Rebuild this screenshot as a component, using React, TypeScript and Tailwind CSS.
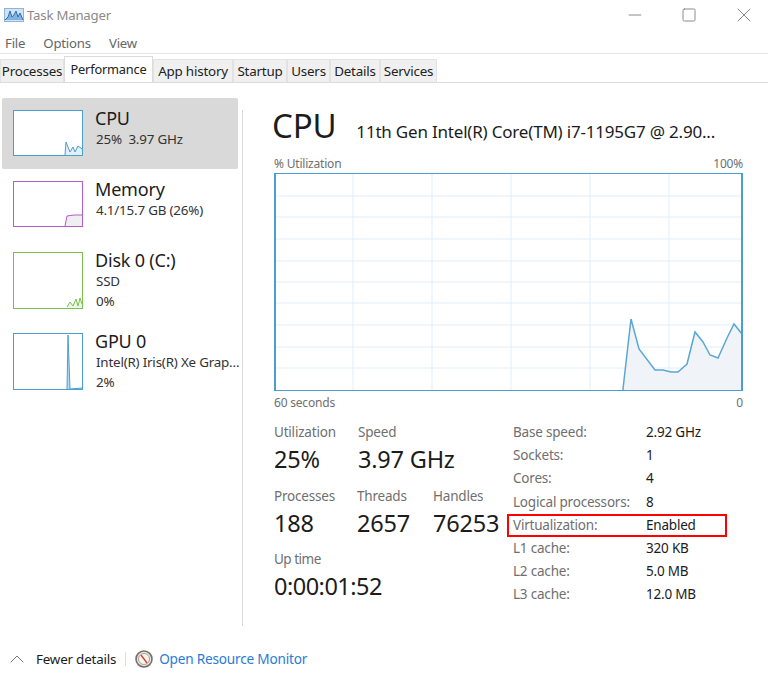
import { ChevronUp, Minus, Square, X } from 'lucide-react';

const tabs = [
  { name: 'Processes', cls: 'w-[64px]' },
  { name: 'Performance', cls: 'w-[89px]' },
  { name: 'App history', cls: 'w-[80px]' },
  { name: 'Startup', cls: 'w-[54px]' },
  { name: 'Users', cls: 'w-[43px]' },
  { name: 'Details', cls: 'w-[50px]' },
  { name: 'Services', cls: 'w-[57px]' },
];

const cpuLine = '348,215 356,145 364,175 380,196 388,196 396,198 403,198 412,190 420,158 428,168 435,181 443,184 452,164 459,150 467,160';

const details = [
  ['Base speed:', '2.92 GHz'],
  ['Sockets:', '1'],
  ['Cores:', '4'],
  ['Logical processors:', '8'],
  ['Virtualization:', 'Enabled'],
  ['L1 cache:', '320 KB'],
  ['L2 cache:', '5.0 MB'],
  ['L3 cache:', '12.0 MB'],
];

function Thumb({ color, fill, line, tall }: { color: string; fill: string; line: string; tall?: boolean }) {
  const h = tall ? 57 : 46;
  const startX = line.split(' ')[0].split(',')[0];
  return (
    <svg
      width="70"
      height={h}
      viewBox={`0 0 68 ${h - 2}`}
      className="block shrink-0 border bg-white"
      style={{ borderColor: color }}
    >
      <polygon points={`${line} 68,${h - 2} ${startX},${h - 2}`} fill={fill} />
      <polyline points={line} fill="none" stroke={color} strokeWidth="1" />
    </svg>
  );
}

function SideItem({ title, lines, active, children }: { title: string; lines: string[]; active?: boolean; children: React.ReactNode }) {
  return (
    <div className={`flex h-[71px] gap-[12px] rounded-[2px] pl-[11px] pt-[12px] ${active ? 'bg-[#d9d9d9]' : ''}`}>
      {children}
      <div className="min-w-0 text-[#1c1c1c]">
        <div className="text-[18px] leading-[22px] -mt-[3px]">{title}</div>
        {lines.map((l) => (
          <div key={l} className="ml-px whitespace-pre text-[13.4px] leading-[20px] text-[#333]">{l}</div>
        ))}
      </div>
    </div>
  );
}

function Stat({ label, value, className }: { label: string; value: string; className?: string }) {
  return (
    <div className={className}>
      <div className="text-[13.5px] leading-[18px] text-[#6f6f6f]">{label}</div>
      <div className="text-[23.5px] leading-[32px] mt-[2px] text-[#1c1c1c]">{value}</div>
    </div>
  );
}

export default function App() {
  return (
    <div className="w-[768px] h-[685px] overflow-hidden bg-white text-[#1c1c1c] font-['Noto_Sans',sans-serif] tracking-[-0.2px]">
      {/* Title bar */}
      <div className="flex h-[30px] items-center pl-[4px]">
        <svg width="20" height="14" viewBox="0 0 20 14" className="mr-[3px]">
          <rect x="0.5" y="0.5" width="19" height="13" fill="#cfe3f5" stroke="#8fb4d8" />
          <polyline points="1,12 4,9 6,3 8,9 10,7 12,3 14,9 16,5 19,12" fill="#7fb2e0" stroke="#2f6fb5" />
        </svg>
        <span className="pt-px text-[13.2px] text-[#8a8a8a]">Task Manager</span>
        <div className="ml-auto flex items-center gap-[36px] pr-[12px] text-[#8a8a8a]">
          <Minus size={20} strokeWidth={1.2} />
          <Square size={16} strokeWidth={1.5} />
          <X size={24} strokeWidth={1} className="-ml-px" />
        </div>
      </div>
      {/* Menu */}
      <div className="flex h-[24px] items-center gap-[18px] border-b border-[#e4e4e4] pl-[5px] pt-[4px] text-[13.2px] text-[#666]">
        <span>File</span>
        <span>Options</span>
        <span>View</span>
      </div>
      {/* Tabs */}
      <div className="flex h-[29px] items-end border-b border-[#dcdcdc]">
        {tabs.map((t) =>
          t.name === 'Performance' ? (
            <div key={t.name} className={`${t.cls} flex h-[26px] items-center justify-center border border-b-0 border-[#dcdcdc] bg-white pt-[1px] text-[12.8px] text-[#222]`}>{t.name}</div>
          ) : (
            <div key={t.name} className={`${t.cls} flex h-[23px] items-center justify-center border border-b-0 border-[#e2e2e2] bg-[#f0f0f0] pt-[1px] text-[13.4px] text-[#222]`}>{t.name}</div>
          ),
        )}
      </div>
      {/* Body */}
      <div className="flex h-[564px]">
        <div className="relative w-[243px] shrink-0 pt-[15px] pl-[2px] pr-[5px]">
          <div className="absolute right-0 top-[27px] h-[516px] w-px bg-[#d9d9d9]" />
          <SideItem active title="CPU" lines={['25%  3.97 GHz']}>
            <Thumb color="#4a9fd0" fill="#e4eef6" line="51,44 52,31 56,41 59,36 61,41 64,35 68,38" />
          </SideItem>
          <SideItem title="Memory" lines={['4.1/15.7 GB (26%)']}>
            <Thumb color="#b45cc8" fill="#f1eef3" line="51,44 53,34 60,33 68,33" />
          </SideItem>
          <SideItem title="Disk 0 (C:)" lines={['SSD', '0%']}>
            <Thumb tall color="#7cc04f" fill="#eef6e8" line="53,54 56,49 59,53 62,46 64,53 66,45 68,51" />
          </SideItem>
          <div className="h-[10px]" />
          <SideItem title="GPU 0" lines={['Intel(R) Iris(R) Xe Grap...', '2%']}>
            <Thumb tall color="#4a9fd0" fill="#b9d8ec" line="53,55 54,1 56,55 68,54" />
          </SideItem>
        </div>

        <div className="ml-[31px] w-[469px] shrink-0 pt-[23px]">
          <div className="flex h-[40px] items-baseline gap-[21px]">
            <span className="-ml-[2px] text-[33px] leading-[40px]">CPU</span>
            <span className="-ml-px whitespace-nowrap text-[17px]">11th Gen Intel(R) Core(TM) i7-1195G7 @ 2.90...</span>
          </div>
          <div className="mt-[10px] flex justify-between text-[12px] leading-[16px] text-[#6f6f6f]">
            <span>% Utilization</span>
            <span>100%</span>
          </div>
          <svg width="469" height="218" viewBox="1 0 465 216" className="mt-[1px] block border border-x-2 border-[#4a9fd0]">
            {[22, 43, 65, 87, 108, 129, 151, 173, 194].map((y) => (
              <line key={y} x1="0" x2="467" y1={y} y2={y} stroke="#dfeefa" />
            ))}
            {[78, 157, 236, 315, 394].map((x) => (
              <line key={x} y1="0" y2="216" x1={x} x2={x} stroke="#dfeefa" />
            ))}
            <polygon points={`${cpuLine} 467,216 348,216`} fill="#f0f4f9" />
            <polyline points={`348,216 ${cpuLine}`} fill="none" stroke="#5ba7d3" strokeWidth="1.5" />
          </svg>
          <div className="mt-[4px] flex justify-between text-[12px] leading-[16px] text-[#6f6f6f]">
            <span>60 seconds</span>
            <span>0</span>
          </div>

          <div className="mt-[12px] flex">
            <div className="w-[239px]">
              <div className="flex">
                <Stat label="Utilization" value="25%" className="w-[84px]" />
                <Stat label="Speed" value="3.97 GHz" />
              </div>
              <div className="mt-[12px] flex">
                <Stat label="Processes" value="188" className="w-[83px]" />
                <Stat label="Threads" value="2657" className="w-[76px]" />
                <Stat label="Handles" value="76253" />
              </div>
              <Stat label="Up time" value="0:00:01:52" className="mt-[11px] tracking-[-0.5px]" />
            </div>
            <div className="-mt-[2px] text-[13.5px] leading-[23.2px]">
              {details.map(([k, v]) => (
                <div key={k} className="relative flex">
                  <span className="w-[133px] text-[#6f6f6f]">{k}</span>
                  <span>{v}</span>
                  {k === 'Virtualization:' && (
                    <div className="absolute -left-[6px] top-0 h-[23px] w-[220px] border-2 border-[#ff0000]" />
                  )}
                </div>
              ))}
            </div>
          </div>
        </div>
      </div>
      {/* Footer */}
      <div className="flex h-[24px] items-center pl-[5px] text-[13.4px]">
        <ChevronUp size={24} strokeWidth={1} className="text-[#777]" />
        <span className="ml-[7px]">Fewer details</span>
        <div className="mx-[9px] h-[14px] w-px bg-[#ddd]" />
        <svg width="18" height="18" viewBox="0 0 18 18">
          <circle cx="9" cy="9" r="8" fill="#e8e4df" stroke="#77706a" strokeWidth="1.6" />
          <circle cx="9" cy="9" r="5.5" fill="#f7f5f2" stroke="#a8a29b" />
          <line x1="6" y1="5" x2="12" y2="13" stroke="#d8412f" strokeWidth="1.4" />
        </svg>
        <span className="ml-[6px] text-[13.6px] text-[#2a7bd6]">Open Resource Monitor</span>
      </div>
    </div>
  );
}
